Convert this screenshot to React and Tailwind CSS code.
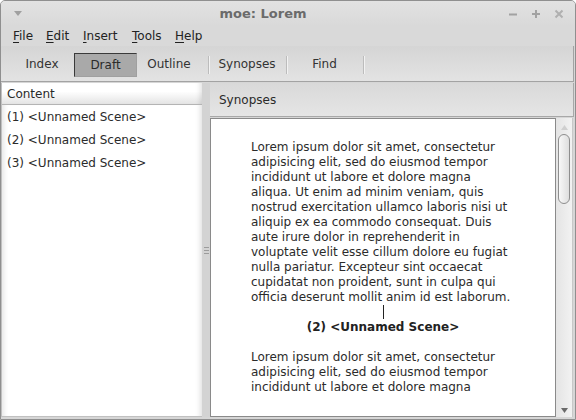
import React from 'react';

const para1 = [
  'Lorem ipsum dolor sit amet, consectetur',
  'adipisicing elit, sed do eiusmod tempor',
  'incididunt ut labore et dolore magna',
  'aliqua. Ut enim ad minim veniam, quis',
  'nostrud exercitation ullamco laboris nisi ut',
  'aliquip ex ea commodo consequat. Duis',
  'aute irure dolor in reprehenderit in',
  'voluptate velit esse cillum dolore eu fugiat',
  'nulla pariatur. Excepteur sint occaecat',
  'cupidatat non proident, sunt in culpa qui',
  'officia deserunt mollit anim id est laborum.',
];

const para2 = [
  'Lorem ipsum dolor sit amet, consectetur',
  'adipisicing elit, sed do eiusmod tempor',
  'incididunt ut labore et dolore magna',
];

const menus = [
  { key: 'F', rest: 'ile', w: 'w-[33px]' },
  { key: 'E', rest: 'dit', w: 'w-[37px]' },
  { key: 'I', rest: 'nsert', w: 'w-[49px]' },
  { key: 'T', rest: 'ools', w: 'w-[43px]' },
  { key: 'H', rest: 'elp', w: 'w-[40px]' },
];

const Separator = () => (
  <div className="w-[14px] h-full flex justify-center items-center">
    <div className="w-[1px] h-[18px] bg-[#bcbcbc] shadow-[1px_0_0_#f2f2f2]" />
  </div>
);

const ToolButton = ({ label, width = 'w-[64px]' }) => (
  <div className={`${width} h-[24px] flex items-center justify-center text-[#333]`}>{label}</div>
);

export default function App() {
  return (
    <div className="w-[576px] h-[420px] flex flex-col bg-[#d6d6d6] border border-[#8f8f8f] rounded-t-[5px] overflow-hidden font-['DejaVu_Sans',sans-serif] text-[12px] leading-[15px]">
      {/* Title bar */}
      <div className="h-[25px] flex items-center bg-gradient-to-b from-[#e2e2e2] to-[#d9d9d9] shrink-0">
        <div className="w-[24px] flex justify-end pr-[3px]">
          <svg width="8" height="5" viewBox="0 0 8 5">
            <path d="M0 0 H8 L4 5 Z" fill="#a0a0a0" />
          </svg>
        </div>
        <div className="flex-1 text-center font-bold text-[13px] text-[#6b6b6b]">moe: Lorem</div>
        <div className="w-[69px] flex mr-[5px]">
          <div className="w-[23px] flex justify-center">
            <svg width="10" height="10" viewBox="0 0 10 10">
              <path d="M1 5.5 H9" stroke="#a2a2a2" strokeWidth="2" />
            </svg>
          </div>
          <div className="w-[23px] flex justify-center">
            <svg width="10" height="10" viewBox="0 0 10 10">
              <path d="M1 5 H9 M5 1 V9" stroke="#a2a2a2" strokeWidth="2" />
            </svg>
          </div>
          <div className="w-[23px] flex justify-center">
            <svg width="10" height="10" viewBox="0 0 10 10">
              <path d="M1.5 1.5 L8.5 8.5 M8.5 1.5 L1.5 8.5" stroke="#b0b0b0" strokeWidth="2" />
            </svg>
          </div>
        </div>
      </div>

      {/* Menu bar */}
      <div className="h-[20px] flex items-center pl-[12px] pt-[1px] bg-[#d9d9d9] text-[#222] shrink-0">
        {menus.map((m) => (
          <span key={m.key} className={m.w}>
            <span className="underline underline-offset-[2px]">{m.key}</span>
            {m.rest}
          </span>
        ))}
      </div>

      {/* Toolbar */}
      <div className="h-[36px] flex items-center pl-[9px] pt-[2px] bg-gradient-to-b from-[#d5d5d5] to-[#e3e3e3] border-b border-r border-[#a3a3a3] mr-[1px] shrink-0">
        <ToolButton label="Index" />
        <div className="w-[63px] h-[24px] flex items-center justify-center pt-[1px] bg-[#a9a9a9] border border-t-[#3a3a3a] border-l-[#3a3a3a] border-b-[#a0a0a0] border-r-[#a0a0a0] text-[#2a2a2a]">
          Draft
        </div>
        <ToolButton label="Outline" />
        <Separator />
        <ToolButton label="Synopses" />
        <Separator />
        <ToolButton label="Find" width="w-[63px]" />
        <Separator />
      </div>

      {/* Main area */}
      <div className="flex-1 flex pt-[1px] pb-[2px] min-h-0">
        {/* Left pane */}
        <div className="w-[201px] flex flex-col border-l border-b border-[#c0c0c0] bg-white">
          <div className="h-[22px] flex items-center pl-[5px] pt-[1px] bg-gradient-to-b from-white from-40% to-[#e4e4e4] border-b border-[#b4b4b4] text-[#2a2a2a] shadow-[inset_-6px_0_5px_-4px_rgba(0,0,0,0.12)]">
            Content
          </div>
          <div className="flex-1 flex flex-col pt-[1px] text-[#2b2b2b] shadow-[inset_6px_0_5px_-4px_rgba(0,0,0,0.1),inset_-6px_0_5px_-4px_rgba(0,0,0,0.12)]">
            <div className="h-[23px] flex items-center pl-[5px]">(1) &lt;Unnamed Scene&gt;</div>
            <div className="h-[23px] flex items-center pl-[5px]">(2) &lt;Unnamed Scene&gt;</div>
            <div className="h-[23px] flex items-center pl-[5px]">(3) &lt;Unnamed Scene&gt;</div>
          </div>
        </div>

        {/* Pane handle */}
        <div className="w-[8px] flex flex-col items-center justify-center gap-[2px] bg-[#d3d3d3]">
          <div className="w-[5px] h-[1px] bg-[#9c9c9c]" />
          <div className="w-[5px] h-[1px] bg-[#9c9c9c]" />
          <div className="w-[5px] h-[1px] bg-[#9c9c9c]" />
        </div>

        {/* Right pane */}
        <div className="flex-1 flex flex-col mr-[1px]">
          <div className="h-[34px] flex items-center pl-[9px] pt-[1px] bg-gradient-to-b from-[#d9d9d9] to-[#e5e5e5] border-b border-r border-[#a8a8a8] text-[#2a2a2a] shrink-0">
            Synopses
          </div>
          <div className="flex-1 flex min-h-0 mt-[1px] mr-[1px]">
            {/* Text view */}
            <div className="w-[346px] bg-white border border-[#8a8a8a] pt-[21px] text-[#2b2b2b] overflow-hidden">
              <div className="pl-[40px]">
                {para1.map((l) => (
                  <div key={l} className="whitespace-nowrap h-[15px]">{l}</div>
                ))}
              </div>
              <div className="h-[15px] flex justify-center">
                <div className="w-[1px] h-[14px] bg-[#222] ml-[1px]" />
              </div>
              <div className="h-[15px] text-center font-bold text-[#222]">(2) &lt;Unnamed Scene&gt;</div>
              <div className="h-[15px]" />
              <div className="pl-[40px]">
                {para2.map((l) => (
                  <div key={l} className="whitespace-nowrap h-[15px]">{l}</div>
                ))}
              </div>
            </div>
            {/* Scrollbar */}
            <div className="flex-1 flex flex-col items-center bg-gradient-to-r from-[#e4e4e4] to-[#f2f2f2] border-r border-[#c8c8c8] pt-[7px] pb-[4px]">
              <svg width="7" height="5" viewBox="0 0 7 5">
                <path d="M3.5 0 L7 5 H0 Z" fill="#cfcfcf" />
              </svg>
              <div className="mt-[4px] w-[12px] h-[70px] rounded-[6px] border border-[#8e8e8e] bg-gradient-to-r from-[#f8f8f8] to-[#dedede]" />
              <div className="flex-1" />
              <svg width="7" height="5" viewBox="0 0 7 5">
                <path d="M0 0 H7 L3.5 5 Z" fill="#6a6a6a" />
              </svg>
            </div>
          </div>
        </div>
      </div>
    </div>
  );
}
